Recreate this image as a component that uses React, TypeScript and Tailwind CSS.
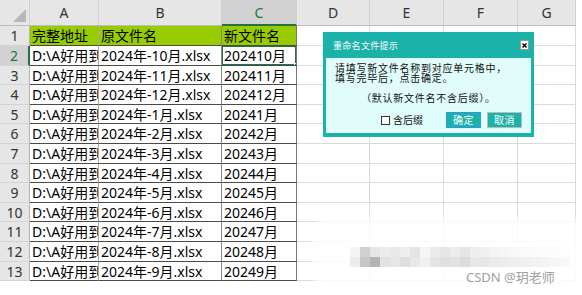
import { Fragment } from "react";

const COLS = [
  { key: "A", w: "w-[69px]" },
  { key: "B", w: "w-[123px]" },
  { key: "C", w: "w-[75px]" },
  { key: "D", w: "w-[73px]" },
  { key: "E", w: "w-[74px]" },
  { key: "F", w: "w-[74px]" },
  { key: "G", w: "w-[58px]" },
];

const MONTHS = ["10", "11", "12", "1", "2", "3", "4", "5", "6", "7", "8", "9"];

const ROWS: string[][] = [
  ["完整地址", "原文件名", "新文件名"],
  ...MONTHS.map((m) => [
    `D:\\A好用到爆的文件\\2024年-${m}月.xlsx`,
    `2024年-${m}月.xlsx`,
    `2024${m}月`,
  ]),
];

// 19.6px rows, spread as 20/20/19/20/19
const ROW_H = ["h-[20px]", "h-[20px]", "h-[19px]", "h-[20px]", "h-[19px]"];

const MOSAIC_TOP = ["bg-[#f4f4f4]", "bg-[#d0d0d0]", "bg-[#e6e6e6]", "bg-[#ececec]", "bg-[#e8e8e8]", "bg-[#eeeeee]", "bg-[#e4e4e4]", "bg-[#f6f6f6]", "bg-[#eaeaea]", "bg-[#e6e6e6]", "bg-[#ececec]", "bg-[#e4e4e4]", "bg-[#eeeeee]", "bg-[#f0f0f0]", "bg-[#f4f4f4]", "bg-[#f6f6f6]", "bg-[#f8f8f8]", "bg-[#fafafa]", "bg-[#fbfbfb]", "bg-[#fcfcfc]", "bg-[#fcfcfc]", "bg-[#fdfdfd]"];
const MOSAIC_BOT = ["bg-[#ececec]", "bg-[#c6c6c6]", "bg-[#b4b4b4]", "bg-[#e2e2e2]", "bg-[#e6e6e6]", "bg-[#dedede]", "bg-[#e8e8e8]", "bg-[#f0f0f0]", "bg-[#e4e4e4]", "bg-[#e0e0e0]", "bg-[#e2e2e2]", "bg-[#dcdcdc]", "bg-[#e8e8e8]", "bg-[#e6e6e6]", "bg-[#eaeaea]", "bg-[#ececec]", "bg-[#eeeeee]", "bg-[#f0f0f0]", "bg-[#f2f2f2]", "bg-[#f4f4f4]", "bg-[#f6f6f6]", "bg-[#f8f8f8]"];

function RenameDialog() {
  return (
    <div className="absolute left-[323px] top-[32px] flex h-[105px] w-[211px] flex-col bg-[#1bb3a9] px-[3px] pb-[4px] font-['Noto_Sans_CJK_SC',sans-serif]">
      <div className="flex h-[26px] shrink-0 items-center justify-between pl-[7px] pr-[2px]">
        <span className="text-[9px] leading-none tracking-[0.3px] text-white">重命名文件提示</span>
        <div className="flex h-[10px] w-[9px] items-center justify-center border border-[#9a9a9a] bg-white">
          <svg width="5" height="5" viewBox="0 0 5 5">
            <path d="M0.5 0.5 L4.5 4.5 M4.5 0.5 L0.5 4.5" stroke="#000" strokeWidth="1.4" />
          </svg>
        </div>
      </div>
      <div className="flex flex-1 flex-col bg-[#e0fdfc] pt-[5px] text-[10px] leading-[10px] tracking-[0.75px] text-[#111]">
        <p className="pl-[9px]">请填写新文件名称到对应单元格中，</p>
        <p className="pl-[9px]">填写完毕后，点击确定。</p>
        <p className="mt-[10px] text-center">（默认新文件名不含后缀）。</p>
        <div className="mt-[9px] flex items-center pr-[9px]">
          <span className="ml-[55px] h-[9px] w-[9px] border border-[#333] bg-white" />
          <span className="ml-[3px] tracking-normal">含后缀</span>
          <div className="ml-auto flex gap-[6px]">
            <button className="flex h-[16px] w-[35px] items-center justify-center border border-[#3d8fe6] bg-[#1bb3a9] text-[10px] tracking-[0.5px] text-white">
              确定
            </button>
            <button className="flex h-[16px] w-[35px] items-center justify-center border border-[#bcbcbc] bg-[#1bb3a9] text-[10px] tracking-[0.5px] text-white">
              取消
            </button>
          </div>
        </div>
      </div>
    </div>
  );
}

function Watermark() {
  return (
    <>
      <div className="absolute left-[312px] top-[218px] h-[70px] w-[272px] rounded-[16px] bg-white/85 blur-[2px]" />
      <div className="absolute left-[350px] top-[247px] flex flex-col">
        <div className="flex">
          {MOSAIC_TOP.map((c, i) => (
            <div key={i} className={`h-[10px] w-[10px] ${c}`} />
          ))}
        </div>
        <div className="flex">
          {MOSAIC_BOT.map((c, i) => (
            <div key={i} className={`h-[10px] w-[10px] ${c}`} />
          ))}
        </div>
      </div>
      <span className="absolute left-[466px] top-[271px] font-['Noto_Sans','Noto_Sans_CJK_SC',sans-serif] text-[13px] leading-none text-[#a0a0a0]">
        CSDN @玥老师
      </span>
    </>
  );
}

export default function App() {
  return (
    <div className="relative h-[295px] w-[582px] overflow-hidden bg-white font-['Noto_Sans','Noto_Sans_CJK_SC',sans-serif] text-[14px]">
      <div className="w-[576px]">
        {/* column letters */}
        <div className="flex h-[26px] border-b border-[#bdbdbd] bg-[#e6e6e6]">
          <div className="relative w-[30px] border-r border-[#cfcfcf]">
            <svg className="absolute bottom-[3px] right-[3px]" width="13" height="13" viewBox="0 0 13 13">
              <path d="M13 0 L13 13 L0 13 Z" fill="#b8b8b8" />
            </svg>
          </div>
          {COLS.map((c) => (
            <div
              key={c.key}
              className={`${c.w} flex items-center justify-center border-r border-[#d0d0d0] ${
                c.key === "C" ? "-mb-px border-b-2 border-b-[#217346] bg-[#d2d2d2] text-[#217346]" : "text-[#333]"
              }`}
            >
              {c.key}
            </div>
          ))}
        </div>

        {ROWS.map((row, r) => {
          const active = r === 1;
          return (
            <div key={r} className={`flex ${ROW_H[r % 5]}`}>
              <div
                className={`flex w-[30px] items-center justify-center border-b border-[#d4d4d4] ${
                  active
                    ? "border-r-2 border-r-[#217346] bg-[#d2d2d2] text-[#217346]"
                    : "border-r border-r-[#b4b4b4] bg-[#e6e6e6] text-[#333]"
                }`}
              >
                {r + 1}
              </div>
              {COLS.map((c, ci) => {
                if (ci < 3) {
                  return (
                    <div
                      key={c.key}
                      className={`relative ${c.w} flex items-center overflow-hidden whitespace-nowrap border-b border-r border-b-[#4a4a4a] pl-[2px] font-['Noto_Sans','Noto_Sans_CJK_SC',sans-serif] text-black ${
                        r === 0 ? "bg-[#99cc00]" : "bg-white"
                      } ${ci === 0 ? "border-r-[#a8a8a8]" : ci === 1 ? "border-r-[#8a8a8a]" : "border-r-[#777]"}`}
                    >
                      {row[ci]}
                      {active && ci === 2 && (
                        <Fragment>
                          <div className="absolute -bottom-px -left-px -right-px -top-px border-2 border-[#217346]" />
                          <div className="absolute -bottom-[3px] -right-[3px] h-[5px] w-[5px] border border-white bg-[#217346]" />
                        </Fragment>
                      )}
                    </div>
                  );
                }
                return <div key={c.key} className={`${c.w} border-b border-r border-[#dadada]`} />;
              })}
            </div>
          );
        })}
      </div>

      <RenameDialog />
      <Watermark />
    </div>
  );
}
